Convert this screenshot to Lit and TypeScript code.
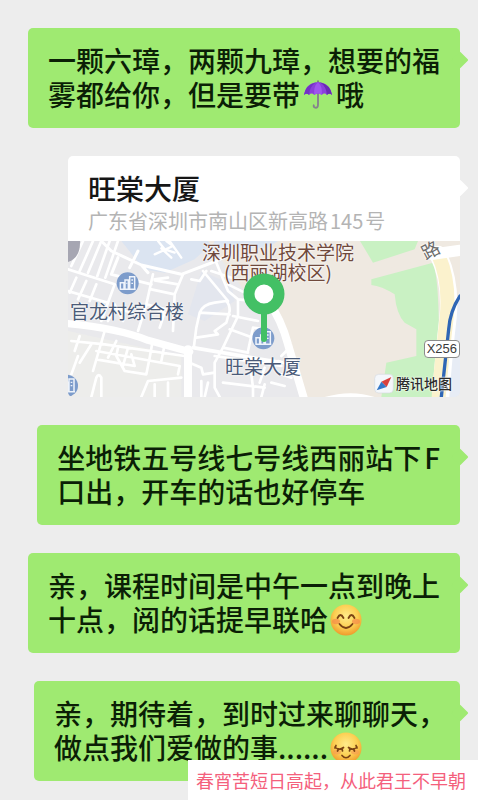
import { LitElement, html, css, svg } from "lit";
import { customElement, property } from "lit/decorators.js";

const sans = css`"Noto Sans CJK SC", "Noto Sans", sans-serif`;

@customElement("chat-bubble")
class ChatBubble extends LitElement {
  static styles = css`
    :host {
      display: block;
      position: relative;
      box-sizing: border-box;
      max-width: 432px;
      padding: 15px 20px 17px;
      border-radius: 5px;
      background: #9fea71;
      color: #0b1f06;
      font: 500 28px/34px ${sans};
    }
    :host([hanging]) {
      padding-right: 14px;
    }
    :host::after {
      content: "";
      position: absolute;
      top: 26px;
      right: -6px;
      width: 12px;
      height: 12px;
      border-radius: 1px;
      background: inherit;
      transform: rotate(45deg);
    }
  `;
  @property({ type: Boolean, reflect: true }) hanging = false;
  render() {
    return html`<slot></slot>`;
  }
}

const building = (x: number, y: number) => svg`
  <g transform="translate(${x} ${y})">
    <circle r="33" fill="#7d9ccb" />
    <path d="M-22 18V-2h11v20M-8 18V-10h10v28M6 18V-20h15v38M-24 18h48" fill="none" stroke="#eef3fb" stroke-width="4.5" />
    <path d="M11 -10h5M11 0h5M-4 0h3" stroke="#eef3fb" stroke-width="4" />
  </g>`;

@customElement("location-card")
class LocationCard extends LitElement {
  static styles = css`
    :host {
      display: block;
      position: relative;
      width: 100%;
      max-width: 392px;
      border-radius: 5px;
      background: #fff;
      font-family: ${sans};
    }
    :host::after {
      content: "";
      position: absolute;
      top: 26px;
      right: -6px;
      width: 12px;
      height: 12px;
      border-radius: 1px;
      background: #fff;
      transform: rotate(45deg);
    }
    .head {
      padding: 15px 20px 6px;
    }
    .name {
      margin: 0 0 2px;
      color: #161616;
      font-size: 28px;
      font-weight: 500;
      line-height: 34px;
    }
    .address {
      margin: 0;
      color: #b4b4b4;
      font-size: 20px;
      line-height: 28px;
      white-space: nowrap;
    }
    .num {
      margin: 0 2px;
    }
    .map {
      position: relative;
      height: 156px;
      overflow: hidden;
      border-radius: 0 0 5px 5px;
      background: #efebe4;
    }
    .canvas {
      display: block;
      width: 100%;
      height: 100%;
    }
    .label {
      position: absolute;
      color: #4b5b78;
      font-size: 19px;
      line-height: 20px;
      white-space: nowrap;
      text-shadow: 0 0 2px #fff, 0 0 2px #fff;
    }
    .school {
      top: 1px;
      left: 134px;
      color: #70493c;
      text-align: center;
    }
    .village {
      top: 60px;
      left: 2px;
    }
    .tower {
      top: 115px;
      left: 157px;
    }
    .road {
      top: -2px;
      left: 353px;
      color: #6c6c6c;
      font-size: 18px;
      transform: rotate(-28deg);
    }
    .route {
      top: 99px;
      right: 0;
      padding: 0 2px;
      border: 1px solid #8b8b8b;
      border-radius: 4px;
      background: #fff;
      color: #3a3a3a;
      font: 13px/16px "Liberation Sans", sans-serif;
    }
    .brand {
      top: 132px;
      left: 328px;
      color: #2c2c2c;
      font-size: 14px;
      font-weight: 500;
    }
    .pin {
      position: absolute;
      top: 31px;
      left: 175px;
      width: 42px;
      height: 70px;
    }
  `;
  render() {
    return html`
      <div class="head">
        <h2 class="name">旺棠大厦</h2>
        <p class="address">广东省深圳市南山区新高路<span class="num">145</span>号</p>
      </div>
      <div class="map">
        <svg class="canvas" viewBox="0 0 1176 468" preserveAspectRatio="xMinYMin slice" aria-hidden="true">
          <rect width="1176" height="468" fill="#e9e9ec" />
          <path d="M0 270L340 345V468H0z" fill="#ededeb" />
          <path d="M160 0H440L380 55L290 95L225 85L200 50z" fill="#dbe4f1" />
          <path d="M400 90l90 40 10 50-90 60-50-20z" fill="#e3e6ee" />
          <path d="M420 0H1176V468H700L645 250L600 170L530 150L470 70z" fill="#efe9e1" />
          <path d="M440 0h190l-30 20h-170z" fill="#dce6f3" />
          <path d="M876 0H1050L1040 25L915 65z" fill="#c9f1c3" />
          <path d="M910 115L1095 65Q1120 130 1110 468H940L955 365L1045 345V265L1010 245Q985 220 980 160Q940 135 910 132z" fill="#c9f1c3" />
          <path d="M770 468Q850 445 920 468z" fill="#fff" />
          <path d="M1120 468V280L1176 150V468z" fill="#e7ecf5" />
          <g fill="none" stroke-linecap="round" stroke-linejoin="round">
            <path d="M915 80L1085 38" stroke="#efe9e1" stroke-width="26" />
            <path d="M1110 40Q1150 120 1140 230Q1128 330 1118 468" stroke="#fff" stroke-width="52" />
            <path d="M1110 40Q1147 120 1136 230Q1124 330 1112 468" stroke="#fbf2cd" stroke-width="42" />
            <path d="M1090 40L1176 28" stroke="#fff" stroke-width="34" />
            <path d="M1176 165Q1146 210 1142 265L1120 468" stroke="#2f66b5" stroke-width="10" />
          </g>
          <g fill="none" stroke="#fff" stroke-width="8" stroke-linecap="round" stroke-linejoin="round">
            <path d="M0 248Q150 262 240 298L365 332" stroke-width="22" />
            <path d="M360 325V468" stroke-width="24" />
            <path d="M375 320L640 365" stroke-width="11" />
            <path d="M600 180Q640 235 660 310L710 480" stroke-width="24" />
            <path d="M45 0L10 75M75 0L35 90M100 0L60 95M125 0L88 105M150 0L112 110" />
            <path d="M0 85L140 130M25 110L5 155M55 120L30 175M85 130L65 180M0 150L120 185M140 130L100 240" />
            <path d="M100 0L130 30L220 72L240 95M150 50L130 100L250 130M210 30L185 80M220 72L340 100L445 60L475 45" stroke-width="9" />
            <path d="M255 100L235 190L210 270M260 118L330 130M250 145L320 160M235 190L315 210M345 100L320 160L315 270M300 110L260 115" />
            <path d="M120 240L140 200L225 225M140 190L165 240M250 200L290 215L275 260" />
            <path d="M270 0L290 25L320 35M295 0L315 15L260 40M280 22L310 50M305 0L340 50" stroke-width="7" />
            <path d="M35 285L20 330M70 310L35 365M110 270L75 390M145 300L120 350M10 300L110 310L350 345M85 330L335 375L330 400M85 355L200 375M150 320L145 345L170 390L235 400L245 350L255 295M180 320L165 375M200 375L190 340M290 310L280 360M30 345L10 400" />
            <path d="M70 468L85 410Q92 395 100 410V468M220 468L240 420L340 410M260 468V430M300 425V468" />
            <path d="M378 315L385 260L395 215Q405 190 440 185L475 180Q485 190 485 210L475 245L440 270L450 280L385 290M395 215L485 220" />
            <path d="M445 65L480 150L510 175V225L465 320L440 365V440L455 468M480 130L560 170M510 175L600 185M430 90L490 110M415 90L395 120L370 115M405 90L480 180" />
            <path d="M495 225L570 240M485 265L555 290M465 320L540 335M365 365L400 380L405 400L440 395M440 345L640 375M465 425L590 440M560 360L550 400L555 440V468M590 380L575 425M610 425L650 435M590 430L580 468M400 420V468M420 425L410 468" />
            <path d="M540 330L555 260L600 265M640 345L655 330M630 360L690 380M640 400L670 410" />
          </g>
          <path d="M0 0H36Q38 50 0 63z" fill="#a6a6b2" />
          ${building(179, 127)} ${building(586, 292)} ${building(-3, 434)}
          <g transform="translate(948 428)">
            <rect x="-28" y="-28" width="56" height="56" rx="12" fill="#f4f7fb" stroke="#d7dbe0" stroke-width="2" />
            <path d="M22 -20L8 10L-8 -6z" fill="#d9413c" />
            <path d="M-22 20L8 10L-8 -6z" fill="#3478c8" />
          </g>
        </svg>
        <span class="label school">深圳职业技术学院<br />(西丽湖校区)</span>
        <span class="label village">官龙村综合楼</span>
        <span class="label tower">旺棠大厦</span>
        <span class="label road">路</span>
        <span class="label route">X256</span>
        <span class="label brand">腾讯地图</span>
        <svg class="pin" viewBox="0 0 42 70" aria-hidden="true">
          <path d="M21 38V67" stroke="#43c065" stroke-width="6" stroke-linecap="round" />
          <circle cx="21" cy="22" r="15" fill="#fff" stroke="#43c065" stroke-width="11" />
        </svg>
      </div>
    `;
  }
}

const umbrella = html`<svg class="emoji umbrella" viewBox="0 0 32 32" role="img" aria-label="伞">
  <path d="M16 12V26Q16 30 13 29.500Q11 29 11.500 27" fill="none" stroke="#85838c" stroke-width="2" stroke-linecap="round" />
  <path d="M1 16Q3 3 16 2Q29 3 31 16Q28 13.500 25.500 16Q23 13 20 16Q16 13 12 16Q9 13 6.500 16Q4 13.500 1 16z" fill="#8a3fdb" />
  <path d="M1 16Q3 5 14 2.500Q7 7 6.500 16Q4 13.500 1 16z" fill="#7430c4" />
  <path d="M12 16Q11 7 16 2.500Q21 7 20 16Q16 13 12 16z" fill="#9f55ee" />
  <path d="M25.500 16Q25 7 18 2.500Q29 5 31 16Q28 13.500 25.500 16z" fill="#6a2ab5" />
  <path d="M16 2V0.500" stroke="#6a6672" stroke-width="1.500" />
</svg>`;

const face = (features: unknown, id: string, label: string) => html`<svg
  class="emoji"
  viewBox="0 0 32 32"
  role="img"
  aria-label=${label}
>
  <defs>
    <radialGradient id=${id} cx="50%" cy="38%" r="62%">
      <stop offset="0" stop-color="#ffec8a" />
      <stop offset="0.6" stop-color="#fccf52" />
      <stop offset="1" stop-color="#ee9a2c" />
    </radialGradient>
  </defs>
  <circle cx="16" cy="16" r="15.500" fill="url(#${id})" />
  ${features}
</svg>`;

const smile = face(
  svg`<ellipse cx="6" cy="17.500" rx="4" ry="2.800" fill="#f58a4a" opacity=".7" />
    <ellipse cx="26" cy="17.500" rx="4" ry="2.800" fill="#f58a4a" opacity=".7" />
    <path d="M7.500 14Q10.500 8 13.500 14M18.500 14Q21.500 8 24.500 14M9.500 20Q16 28 22.500 20" fill="none" stroke="#7a4313" stroke-width="1.800" stroke-linecap="round" />`,
  "smile",
  "微笑",
);

const shy = face(
  svg`<ellipse cx="7" cy="20" rx="4" ry="2.500" fill="#f79a55" opacity=".6" />
    <ellipse cx="25" cy="20" rx="4" ry="2.500" fill="#f79a55" opacity=".6" />
    <path d="M5 15Q9 19 13.500 15.500M18.500 15.500Q23 19 27 15M6 13.500L5 16M8.500 17L7.500 19M12 16.500L12.500 19M20 16.500L19.500 19M23.500 17L24.500 19M26 13.500L27 16M12 23.500Q16 28 20 23.500" fill="none" stroke="#7a4313" stroke-width="1.700" stroke-linecap="round" />`,
  "shy",
  "害羞",
);

@customElement("app-root")
class AppRoot extends LitElement {
  static styles = css`
    :host {
      display: block;
      position: relative;
      box-sizing: border-box;
      min-height: 100vh;
      background: #ededed;
      font-family: ${sans};
    }
    .thread {
      display: flex;
      flex-direction: column;
      align-items: flex-end;
      gap: 28px;
      padding: 28px 18px 19px 28px;
    }
    .emoji {
      width: 32px;
      height: 32px;
      margin: -4px 2px;
      vertical-align: -1px;
    }
    .umbrella {
      width: 30px;
      margin: -4px 3px;
    }
    .latin {
      margin-left: 3px;
    }
    .caption {
      position: absolute;
      right: 0;
      bottom: 0;
      box-sizing: border-box;
      margin: 0;
      padding: 0 12px 0 8px;
      background: #fff;
      color: #f4607c;
      font: 400 18px/40px "KaiTi", "STKaiti", ${sans};
      white-space: nowrap;
    }
  `;
  render() {
    return html`
      <main class="thread">
        <chat-bubble>一颗六璋，两颗九璋，想要的福<br />雾都给你，但是要带${umbrella}哦</chat-bubble>
        <location-card></location-card>
        <chat-bubble>坐地铁五号线七号线西丽站下<span class="latin">F</span><br />口出，开车的话也好停车</chat-bubble>
        <chat-bubble>亲，课程时间是中午一点到晚上<br />十点，阅的话提早联哈${smile}</chat-bubble>
        <chat-bubble hanging>亲，期待着，到时过来聊聊天，<br />做点我们爱做的事......${shy}</chat-bubble>
      </main>
      <p class="caption">春宵苦短日高起，从此君王不早朝</p>
    `;
  }
}
